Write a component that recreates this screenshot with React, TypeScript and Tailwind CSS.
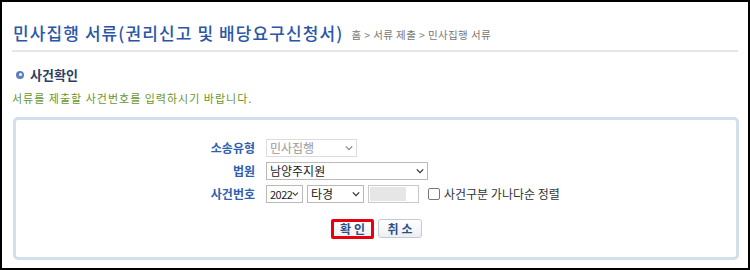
import React from "react";

const font = { fontFamily: '"Noto Sans CJK KR", "Noto Sans", sans-serif' };

const Chevron: React.FC<{ className?: string }> = ({ className }) => (
  <svg viewBox="0 0 10 6" className={className} fill="none" stroke="currentColor">
    <path d="M1 1l4 4 4-4" strokeWidth="1.6" />
  </svg>
);

const FakeSelect: React.FC<{
  value: string;
  width: string;
  disabled?: boolean;
  small?: boolean;
}> = ({ value, width, disabled, small }) => (
  <div
    className={`${width} h-[18px] flex items-center justify-between border ${
      disabled ? "border-[#dcdcdc] text-[#9a9a9a]" : "border-[#b9b9b9] text-[#222]"
    } bg-white pl-[3px] pr-[3px]`}
  >
    <span className={`${small ? "text-[11px] tracking-[-0.5px]" : "text-[12px]"} leading-none`}>
      {value}
    </span>
    <Chevron className={`w-[8px] h-[6px] ${disabled ? "text-[#8a8a8a]" : "text-[#333]"}`} />
  </div>
);

export default function App() {
  return (
    <div
      style={font}
      className="w-[750px] h-[270px] bg-white border-2 border-black overflow-hidden"
    >
      {/* 제목 */}
      <div className="mx-[10px] mt-[20px] pb-[6px] border-b-2 border-[#e6e6e6] flex items-end">
        <h1 className="pl-[1px] text-[17px] leading-[22px] font-medium text-[#2b56a8] tracking-[1.1px]">
          민사집행 서류(권리신고 및 배당요구신청서)
        </h1>
        <span className="ml-[8px] mb-[1px] text-[10.5px] text-[#777] tracking-[0.4px]">
          홈 &gt; 서류 제출 &gt; 민사집행 서류
        </span>
      </div>

      {/* 사건확인 */}
      <div className="mx-[12px] mt-[16px] flex items-center">
        <span className="w-[8px] h-[8px] rounded-full bg-[#5b7fc0] flex items-center justify-center mr-[6px] ml-[2px]">
          <span className="w-[3px] h-[3px] rounded-full bg-white" />
        </span>
        <span className="text-[13px] font-bold text-[#2c3e63] leading-none">사건확인</span>
      </div>
      <p className="mx-[10px] mt-[12px] text-[11px] text-[#67962a] tracking-[1px] leading-none">
        서류를 제출할 사건번호를 입력하시기 바랍니다.
      </p>

      {/* 입력 박스 */}
      <div className="ml-[11px] mr-[9px] mt-[13px] h-[143px] border-[3px] border-[#d3e0ec] rounded-[5px] bg-white pt-[19px]">
        <div className="grid grid-cols-[239px_1fr] gap-x-[11px] gap-y-[5px] items-center">
          <span className="text-right text-[12px] font-bold text-[#2d5fae]">소송유형</span>
          <FakeSelect value="민사집행" width="w-[91px]" disabled />

          <span className="text-right text-[12px] font-bold text-[#2d5fae]">법원</span>
          <FakeSelect value="남양주지원" width="w-[162px]" />

          <span className="text-right text-[12px] font-bold text-[#2d5fae]">사건번호</span>
          <div className="flex items-center">
            <FakeSelect value="2022" width="w-[37px]" small />
            <div className="ml-[4px]">
              <FakeSelect value="타경" width="w-[57px]" />
            </div>
            <div className="ml-[4px] w-[51px] h-[18px] border border-[#c9c9c9] bg-white p-[1px] flex">
              <div className="w-[36px] bg-[#e6e6e6]" />
            </div>
            <label className="ml-[9px] flex items-center text-[12px] text-[#333]">
              <span className="w-[12px] h-[12px] border border-[#777] rounded-[2px] bg-white mr-[4px]" />
              사건구분 가나다순 정렬
            </label>
          </div>
        </div>

        <div className="mt-[16px] flex justify-center gap-[4px] pl-[1px]">
          <button className="w-[43px] h-[20px] border-[3px] border-[#e8000f] bg-gradient-to-b from-white to-[#eef1f4] text-[12px] font-bold text-[#2d4f86] tracking-[3px] pl-[3px] leading-none rounded-[2px]">
            확인
          </button>
          <button className="w-[44px] h-[19px] border border-[#c5c9cf] bg-gradient-to-b from-white to-[#eceff2] text-[12px] font-bold text-[#2d4f86] tracking-[3px] pl-[3px] leading-none rounded-[3px]">
            취소
          </button>
        </div>
      </div>
    </div>
  );
}
